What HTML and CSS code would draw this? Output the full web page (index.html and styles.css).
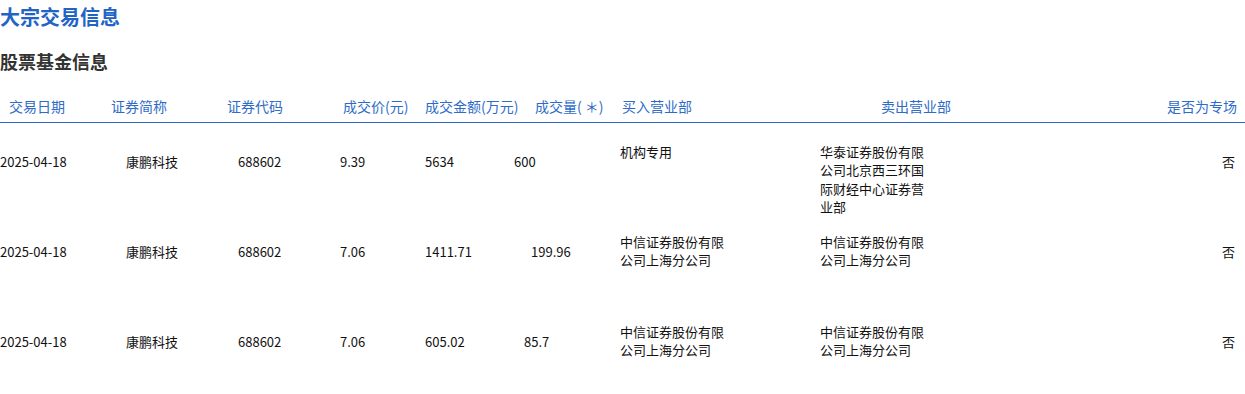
FILE: index.html
```html
<!DOCTYPE html>
<html lang="zh-CN">
<head>
<meta charset="utf-8">
<title>大宗交易信息</title>
<link rel="stylesheet" href="styles.css">
</head>
<body>
<h1 class="title">大宗交易信息</h1>
<h2 class="subtitle">股票基金信息</h2>
<div class="table">
  <div class="row head">
    <div class="c c1">交易日期</div>
    <div class="c c2">证券简称</div>
    <div class="c c3">证券代码</div>
    <div class="c c4">成交价(元)</div>
    <div class="c c5">成交金额(万元)</div>
    <div class="c c6">成交量( ＊)</div>
    <div class="c c7">买入营业部</div>
    <div class="c c8">卖出营业部</div>
    <div class="c c9">是否为专场</div>
  </div>
  <div class="row body">
    <div class="c c1 num">2025-04-18</div>
    <div class="c c2 num">康鹏科技</div>
    <div class="c c3 num">688602</div>
    <div class="c c4 num">9.39</div>
    <div class="c c5 num">5634</div>
    <div class="c c6 num v1">600</div>
    <div class="c c7 txt">机构专用</div>
    <div class="c c8 txt">华泰证券股份有限公司北京西三环国际财经中心证券营业部</div>
    <div class="c c9 num">否</div>
  </div>
  <div class="row body">
    <div class="c c1 num">2025-04-18</div>
    <div class="c c2 num">康鹏科技</div>
    <div class="c c3 num">688602</div>
    <div class="c c4 num">7.06</div>
    <div class="c c5 num">1411.71</div>
    <div class="c c6 num v2">199.96</div>
    <div class="c c7 txt">中信证券股份有限公司上海分公司</div>
    <div class="c c8 txt">中信证券股份有限公司上海分公司</div>
    <div class="c c9 num">否</div>
  </div>
  <div class="row body">
    <div class="c c1 num">2025-04-18</div>
    <div class="c c2 num">康鹏科技</div>
    <div class="c c3 num">688602</div>
    <div class="c c4 num">7.06</div>
    <div class="c c5 num">605.02</div>
    <div class="c c6 num v3">85.7</div>
    <div class="c c7 txt">中信证券股份有限公司上海分公司</div>
    <div class="c c8 txt">中信证券股份有限公司上海分公司</div>
    <div class="c c9 num">否</div>
  </div>
</div>
</body>
</html>
```
FILE: styles.css
```css
html, body {
  margin: 0;
  padding: 0;
  background: #fff;
}
body {
  font-family: "Noto Sans CJK SC", "Noto Sans", sans-serif;
  color: #111;
  width: 1245px;
}
.title {
  margin: 3px 0 0;
  font-size: 20px;
  line-height: 28px;
  font-weight: 700;
  color: #2264c6;
}
.subtitle {
  margin: 17px 0 0;
  font-size: 18px;
  line-height: 26px;
  font-weight: 700;
  color: #333;
}
.table {
  margin-top: 14px;
}
.row {
  display: grid;
  grid-template-columns: 100px 112px 108px 98px 92px 102px 200px 188px 1fr;
}
.c {
  white-space: pre;
}
.head {
  height: 34px;
  border-bottom: 1px solid #2a67c4;
  font-size: 14px;
  line-height: 20px;
  color: #2f6cc8;
}
.head .c { padding-top: 8px; }
.head .c1 { padding-left: 9px; }
.head .c2 { padding-left: 11px; }
.head .c3 { padding-left: 15px; }
.head .c4 { padding-left: 23px; }
.head .c5 { padding-left: 7px; }
.head .c6 { padding-left: 25px; }
.head .c7 { padding-left: 10px; }
.head .c8 { padding-left: 69px; }
.head .c9 { text-align: right; padding-right: 8px; }

.body {
  height: 90px;
  font-size: 13px;
  line-height: 18.4px;
  color: #111;
}
.body .num { padding-top: 30px; }
.body .txt {
  padding-top: 20px;
  padding-left: 8px;
  white-space: normal;
  width: 110px;
}
.body .c1 { padding-left: 0; }
.body .c2 { padding-left: 26px; }
.body .c3 { padding-left: 26px; }
.body .c4 { padding-left: 20px; }
.body .c5 { padding-left: 7px; }
.body .v1 { padding-left: 4px; }
.body .v2 { padding-left: 21px; }
.body .v3 { padding-left: 14px; }
.body .c9 { text-align: right; padding-right: 10px; }
```
